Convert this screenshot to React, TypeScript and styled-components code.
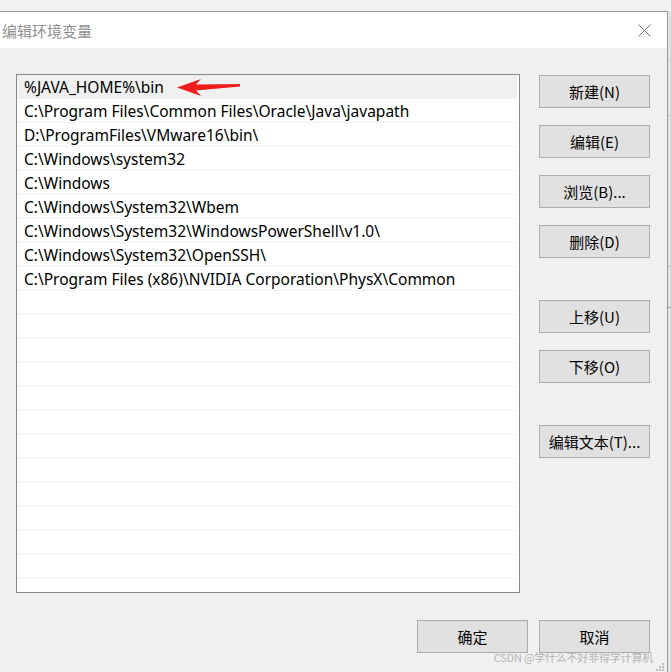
import React from "react";
import styled, { createGlobalStyle } from "styled-components";

const Global = createGlobalStyle`
  html, body { margin: 0; padding: 0; background: #e6e6e6; }
  body { width: 671px; height: 672px; overflow: hidden; font-family: "Noto Sans", "Noto Sans CJK SC", sans-serif; }
  #root { width: 671px; height: 672px; }
`;

const Page = styled.div`
  width: 671px;
  height: 672px;
  display: flex;
  flex-direction: column;
  background: linear-gradient(#f2f2f2, #e4e4e4);
`;

const TopStrip = styled.div`
  height: 11px;
  flex: none;
`;

const Row = styled.div`
  flex: 1;
  display: flex;
  min-height: 0;
`;

const Window = styled.div`
  width: 667px;
  border-top: 1px solid #9a9a9a;
  border-right: 1px solid #9a9a9a;
  background: #f0f0f0;
  display: flex;
  flex-direction: column;
  position: relative;
`;

const SideStrip = styled.div`
  flex: 1;
  background: #e2e2e2;
  display: flex;
  flex-direction: column;
`;

const SideMark = styled.div<{ $h: number; $c: string }>`
  height: ${(p) => p.$h}px;
  border-bottom: 1px solid ${(p) => p.$c};
`;

const TitleBar = styled.div`
  height: 36px;
  background: #ffffff;
  display: flex;
  align-items: center;
  justify-content: space-between;
  padding: 0 16px 0 2px;
`;

const Title = styled.div`
  font-family: "Noto Sans CJK SC", sans-serif;
  font-size: 15px;
  color: #8f8f8f;
`;

const Body = styled.div`
  flex: 1;
  display: flex;
  flex-direction: column;
  padding: 26px 0 0 16px;
`;

const Main = styled.div`
  display: flex;
  gap: 19px;
`;

const ListBox = styled.div`
  width: 500px;
  height: 517px;
  border: 1px solid #828790;
  background: #ffffff;
  overflow: hidden;
  padding-right: 2px;
`;

const ListRow = styled.div<{ $sel?: boolean }>`
  height: 22px;
  padding-top: 1px;
  border-bottom: 1px solid #f0f0f0;
  background: ${(p) => (p.$sel ? "#f0f0f0" : "#ffffff")};
  display: flex;
  align-items: center;
  padding-left: 7px;
  font-family: "Noto Sans", "Noto Sans CJK SC", sans-serif;
  font-size: 15.5px;
  color: #000000;
  white-space: nowrap;
  position: relative;
`;

const Arrow = styled.svg`
  position: absolute;
  left: 160px;
  top: 3px;
`;

const ButtonCol = styled.div`
  display: flex;
  flex-direction: column;
  padding-top: 1px;
`;

const Btn = styled.div<{ $mt?: number }>`
  width: 109px;
  height: 31px;
  margin-top: ${(p) => p.$mt ?? 0}px;
  background: #e1e1e1;
  border: 1px solid #adadad;
  display: flex;
  align-items: center;
  justify-content: center;
  font-family: "Noto Sans CJK SC", sans-serif;
  font-size: 15px;
  color: #000000;
`;

const Footer = styled.div`
  display: flex;
  justify-content: flex-end;
  gap: 11px;
  padding: 27px 17px 0 0;
`;

const Watermark = styled.div`
  position: absolute;
  right: 14px;
  bottom: 7px;
  font-family: "Noto Sans CJK SC", sans-serif;
  font-size: 11px;
  color: #b5b5b5;
  letter-spacing: -0.2px;
`;

const Grip = styled.svg`
  position: absolute;
  right: 2px;
  bottom: 0px;
`;

const rows = [
  "%JAVA_HOME%\\bin",
  "C:\\Program Files\\Common Files\\Oracle\\Java\\javapath",
  "D:\\ProgramFiles\\VMware16\\bin\\",
  "C:\\Windows\\system32",
  "C:\\Windows",
  "C:\\Windows\\System32\\Wbem",
  "C:\\Windows\\System32\\WindowsPowerShell\\v1.0\\",
  "C:\\Windows\\System32\\OpenSSH\\",
  "C:\\Program Files (x86)\\NVIDIA Corporation\\PhysX\\Common",
];

export default function App() {
  const all = [...rows, ...Array(13).fill("")];
  return (
    <>
      <Global />
      <Page>
        <TopStrip />
        <Row>
          <Window>
            <TitleBar>
              <Title>编辑环境变量</Title>
              <svg width="13" height="13" viewBox="0 0 13 13">
                <path d="M0.5 0.5 L12.5 12.5 M12.5 0.5 L0.5 12.5" stroke="#707070" strokeWidth="1" />
              </svg>
            </TitleBar>
            <Body>
              <Main>
                <ListBox>
                  {all.map((t, i) => (
                    <ListRow key={i} $sel={i === 0}>
                      {t}
                      {i === 0 && (
                        <Arrow width="64" height="18" viewBox="0 0 64 18">
                          <path d="M0 9.5 L24 1 L19 6.5 L63 6 L63 8.5 L19 12.5 L24 18 Z" fill="#f01d1d" />
                        </Arrow>
                      )}
                    </ListRow>
                  ))}
                </ListBox>
                <ButtonCol>
                  <Btn>新建(N)</Btn>
                  <Btn $mt={17}>编辑(E)</Btn>
                  <Btn $mt={17}>浏览(B)...</Btn>
                  <Btn $mt={17}>删除(D)</Btn>
                  <Btn $mt={42}>上移(U)</Btn>
                  <Btn $mt={17}>下移(O)</Btn>
                  <Btn $mt={42}>编辑文本(T)...</Btn>
                </ButtonCol>
              </Main>
              <Footer>
                <Btn>确定</Btn>
                <Btn>取消</Btn>
              </Footer>
            </Body>
            <Watermark>CSDN @学什么不好非得学计算机</Watermark>
            <Grip width="10" height="10" viewBox="0 0 10 10">
              <rect x="7" y="1" width="2" height="2" fill="#bcbcbc" />
              <rect x="4" y="4" width="2" height="2" fill="#bcbcbc" />
              <rect x="7" y="4" width="2" height="2" fill="#bcbcbc" />
              <rect x="1" y="7" width="2" height="2" fill="#bcbcbc" />
              <rect x="4" y="7" width="2" height="2" fill="#bcbcbc" />
              <rect x="7" y="7" width="2" height="2" fill="#bcbcbc" />
            </Grip>
          </Window>
          <SideStrip>
            <SideMark $h={48} $c="#d0d0d0" />
            <SideMark $h={55} $c="#c8c8c8" />
            <SideMark $h={150} $c="#c0c0c0" />
            <SideMark $h={40} $c="#a0a0a0" />
          </SideStrip>
        </Row>
      </Page>
    </>
  );
}
